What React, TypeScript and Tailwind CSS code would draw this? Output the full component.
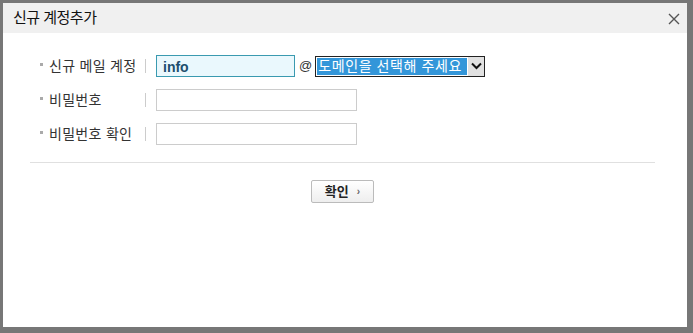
import React from 'react';

const FONT = { fontFamily: '"Liberation Sans", "Noto Sans CJK KR", sans-serif' };

const Label: React.FC<{ text: string }> = ({ text }) => (
  <div className="flex items-center w-[116px] pl-[10px]">
    <span className="w-[3px] h-[3px] bg-[#aaaaaa] mr-[6px] -mt-[3px]" />
    <span className="text-[14px] text-[#333333] leading-none tracking-[0.3px]">{text}</span>
    <span className="ml-auto w-px h-[14px] bg-[#cccccc]" />
  </div>
);

export default function App() {
  return (
    <div className="w-[693px] h-[333px] bg-[#777777] pt-[3px] pl-[3px] pr-[6px] pb-[6px]" style={FONT}>
      <div className="w-full h-full bg-white flex flex-col">
        <div className="h-[30px] bg-[#f0f0f0] flex items-center justify-between pl-[10px] pr-[7px]">
          <span className="text-[15px] text-[#111111] tracking-[-0.5px]">신규 계정추가</span>
          <svg width="12" height="12" viewBox="0 0 12 12" className="mt-[1px]">
            <path d="M1 1L11 11M11 1L1 11" stroke="#555555" strokeWidth="1.4" />
          </svg>
        </div>
        <div className="pt-[22px] px-[27px]">
          <div className="flex flex-col gap-[12px]">
            <div className="flex items-center h-[22px]">
              <Label text="신규 메일 계정" />
              <div className="ml-[10px] w-[139px] h-[22px] border border-[#3a9ab0] bg-[#eaf8fd] flex items-center pl-[6px]">
                <span className="text-[14px] font-bold text-[#1d4f6e] mt-[2px]">info</span>
              </div>
              <span className="ml-[4px] text-[13px] text-[#333333]">@</span>
              <div className="ml-[3px] w-[170px] h-[21px] border border-[#222222] flex">
                <div className="flex-1 bg-[#3396d9] m-[1px] flex items-center pl-[1px]">
                  <span className="text-[14px] text-white leading-none whitespace-nowrap tracking-[0.6px]">도메인을 선택해 주세요</span>
                </div>
                <div className="w-[16px] bg-[#e1e1e1] flex items-center justify-center">
                  <svg width="11" height="8" viewBox="0 0 11 8">
                    <path d="M1 1.5L5.5 6L10 1.5" stroke="#111111" strokeWidth="2" fill="none" />
                  </svg>
                </div>
              </div>
            </div>
            <div className="flex items-center h-[22px]">
              <Label text="비밀번호" />
              <div className="ml-[10px] w-[201px] h-[22px] border border-[#cccccc] bg-white" />
            </div>
            <div className="flex items-center h-[22px]">
              <Label text="비밀번호 확인" />
              <div className="ml-[10px] w-[201px] h-[22px] border border-[#cccccc] bg-white" />
            </div>
          </div>
          <div className="mt-[17px] h-px bg-[#e0e0e0] mr-[5px]" />
          <div className="flex justify-center mt-[17px] mr-[5px]">
            <button className="h-[23px] w-[63px] border border-[#bbbbbb] rounded-[2px] bg-gradient-to-b from-white to-[#eeeeee] flex items-center justify-center gap-[8px]">
              <span className="text-[13px] font-bold text-[#222222]">확인</span>
              <span className="text-[10px] font-bold text-[#666666] leading-none">›</span>
            </button>
          </div>
        </div>
      </div>
    </div>
  );
}
